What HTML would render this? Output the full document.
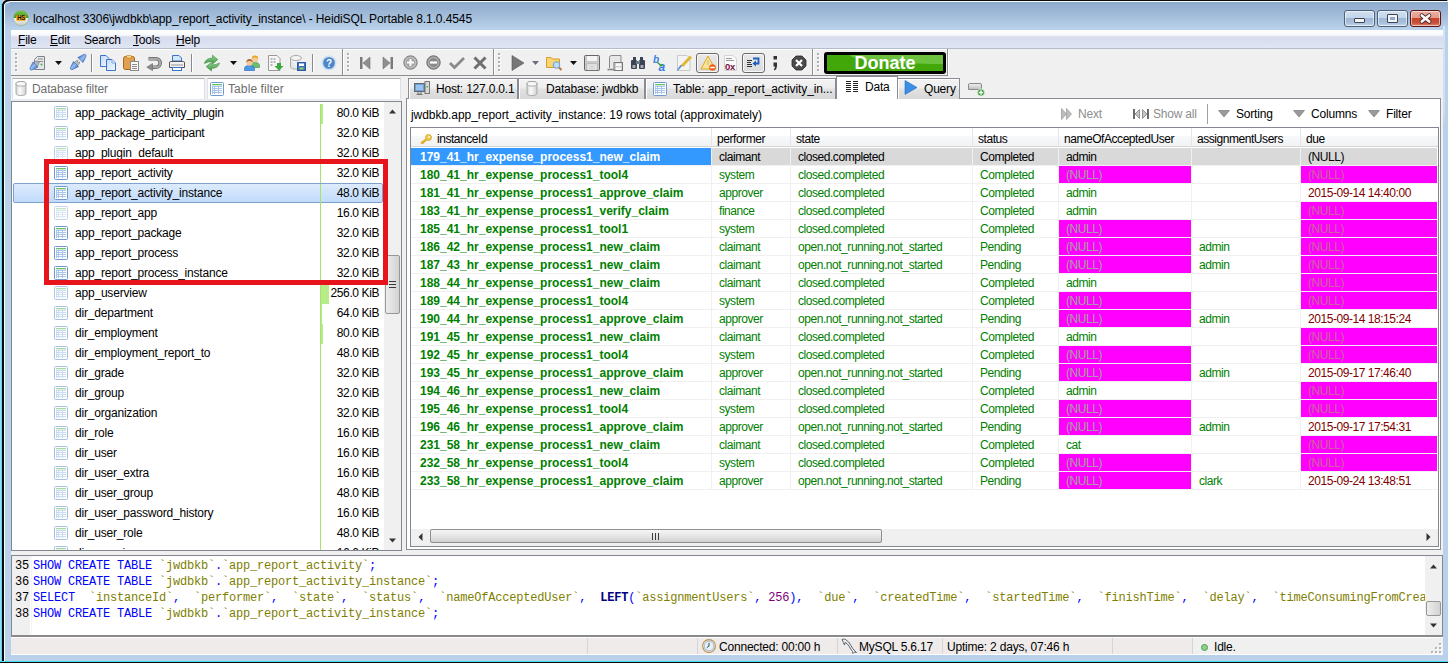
<!DOCTYPE html>
<html><head><meta charset="utf-8"><style>
*{box-sizing:border-box;margin:0;padding:0}
html,body{width:1448px;height:663px;overflow:hidden;background:#b9d1ea}
body{position:relative;font-family:"Liberation Sans", sans-serif;font-size:12px;color:#000;letter-spacing:-0.2px}
.ab{position:absolute}
.t{position:absolute;white-space:pre;line-height:14px}
svg{position:absolute;overflow:visible}
</style></head><body>
<div class="ab" style="left:0;top:0;width:1448px;height:663px;background:linear-gradient(#8eaacb 2px,#a0bad8 14px,#b9d1ea 29px,#b9d1ea 100%)"></div><div class="ab" style="left:0;top:0;width:1447px;height:1px;background:#0a0a0a"></div><div class="ab" style="left:4px;top:1px;width:1444px;height:1px;background:#f8fbff"></div><div class="ab" style="left:0;top:0;width:1px;height:663px;background:#a8d4ee"></div><div class="ab" style="left:1px;top:0;width:1px;height:663px;background:#4fd8f8"></div><div class="ab" style="left:2px;top:0;width:2px;height:663px;background:#0a0a0a"></div><div class="ab" style="left:4px;top:2px;width:1px;height:659px;background:#fbfdff"></div><div class="ab" style="left:0;top:661px;width:1448px;height:1px;background:#40dcf0"></div><div class="ab" style="left:0;top:662px;width:1448px;height:1px;background:#0a0a0a"></div><svg style="left:0;top:0" width="10" height="10" viewBox="0 0 10 10"><rect x="0" y="0" width="9" height="4" fill="#b8d0ee"/><rect x="0" y="0" width="2" height="10" fill="#a8d4ee"/><rect x="1" y="3" width="1" height="7" fill="#4fd8f8"/><path d="M3 10 V6.5 Q3 1 8.5 0.5 H10" fill="none" stroke="#0a0a0a" stroke-width="2"/><path d="M4.5 10 V6.5 Q4.5 2 9 2 H10" fill="none" stroke="#f8fbff" stroke-width="1"/><path d="M5.5 10 V6.5 Q5.5 3 9 3 H10" fill="#9bb6d5" stroke="none"/></svg><svg style="left:13px;top:10px" width="16" height="16" viewBox="0 0 16 16">
<defs><linearGradient id="ig" x1="0" y1="0" x2="0" y2="1"><stop offset="0" stop-color="#7cc84a"/><stop offset="0.5" stop-color="#3f9a1c"/><stop offset="0.5" stop-color="#f4f4f0"/><stop offset="1" stop-color="#c9cfc0"/></linearGradient></defs>
<circle cx="8" cy="8" r="7.6" fill="url(#ig)" stroke="#9aa88a" stroke-width="0.6"/>
<rect x="3.2" y="5.3" width="9.6" height="5.4" rx="1.2" fill="#f5a81c"/>
<text x="8" y="10.3" font-family="Liberation Sans" font-weight="bold" font-size="7" text-anchor="middle" fill="#111" letter-spacing="-0.4" transform="translate(8 0) scale(0.85 1) translate(-8 0)">HS</text>
</svg><div class="t" style="left:33px;top:12px;font-size:12px;letter-spacing:-0.1px;color:#000">localhost 3306\jwdbkb\app_report_activity_instance\ - HeidiSQL Portable 8.1.0.4545</div><div class="ab" style="left:1344px;top:10px;width:31px;height:17px;border:1px solid #4f607a;border-radius:3px;background:linear-gradient(#d0dff0 0%,#c3d6ec 45%,#9fb8d5 50%,#a9c1dd 80%,#c7daef 100%);box-shadow:inset 0 0 0 1px rgba(255,255,255,0.55)"></div><div class="ab" style="left:1377px;top:10px;width:31px;height:17px;border:1px solid #4f607a;border-radius:3px;background:linear-gradient(#d0dff0 0%,#c3d6ec 45%,#9fb8d5 50%,#a9c1dd 80%,#c7daef 100%);box-shadow:inset 0 0 0 1px rgba(255,255,255,0.55)"></div><div class="ab" style="left:1410px;top:10px;width:31px;height:17px;border:1px solid #5a1414;border-radius:3px;background:linear-gradient(#eab0a2 0%,#e39a88 45%,#c7452a 50%,#c8503a 80%,#d98a70 100%);box-shadow:inset 0 0 0 1px rgba(255,255,255,0.55)"></div><div class="ab" style="left:1354px;top:18px;width:11px;height:5px;background:#f4f4f4;border:1px solid #3b4556;border-radius:1px"></div><div class="ab" style="left:1387px;top:14px;width:11px;height:9px;background:#8fa9c8;border:1px solid #3b4556;box-shadow:inset 0 0 0 2px #f4f4f4;border-radius:1px"></div><svg style="left:1420px;top:14px" width="11" height="9" viewBox="0 0 11 9"><path d="M1.8 1.5 L9.2 7.5 M9.2 1.5 L1.8 7.5" stroke="#4a2a2a" stroke-width="4.2" stroke-linecap="round"/><path d="M1.8 1.5 L9.2 7.5 M9.2 1.5 L1.8 7.5" stroke="#fafafa" stroke-width="2.6" stroke-linecap="round"/></svg><div class="ab" style="left:1443px;top:26px;width:2px;height:100px;background:linear-gradient(#d4e4f4,#cddff1 85%,rgba(185,209,234,0))"></div><div class="ab" style="left:11px;top:30px;width:1432px;height:625px;background:#f0f0f0"></div><div class="ab" style="left:11px;top:30px;width:1432px;height:19px;background:linear-gradient(#ffffff 0px,#f8f9fc 5px,#d7dcee 7px,#e0e5f3 18px);border-bottom:1px solid #b6bccc"></div><div class="t" style="left:18px;top:33px;color:#000"><span style="text-decoration:underline;text-underline-offset:1px">F</span>ile</div><div class="t" style="left:50px;top:33px;color:#000"><span style="text-decoration:underline;text-underline-offset:1px">E</span>dit</div><div class="t" style="left:84px;top:33px;color:#000">Search</div><div class="t" style="left:133px;top:33px;color:#000"><span style="text-decoration:underline;text-underline-offset:1px">T</span>ools</div><div class="t" style="left:176px;top:33px;color:#000"><span style="text-decoration:underline;text-underline-offset:1px">H</span>elp</div><div class="ab" style="left:11px;top:49px;width:937px;height:27px;background:#f0f0f0;border-top:1px solid #fff;border-bottom:1px solid #8e8e8e"></div><div class="ab" style="left:342px;top:49px;width:1px;height:26px;background:#8e8e8e"></div><div class="ab" style="left:343px;top:50px;width:1px;height:25px;background:#fff"></div><div class="ab" style="left:493px;top:49px;width:1px;height:26px;background:#8e8e8e"></div><div class="ab" style="left:494px;top:50px;width:1px;height:25px;background:#fff"></div><div class="ab" style="left:812px;top:49px;width:1px;height:26px;background:#8e8e8e"></div><div class="ab" style="left:813px;top:50px;width:1px;height:25px;background:#fff"></div><div class="ab" style="left:947px;top:49px;width:1px;height:26px;background:#8e8e8e"></div><div class="ab" style="left:948px;top:50px;width:1px;height:25px;background:#fff"></div><div class="ab" style="left:15px;top:53px;width:2px;height:2px;background:#a8a8a8;border-radius:0 1px 0 1px;box-shadow:1px 1px 0 #fff"></div><div class="ab" style="left:15px;top:57px;width:2px;height:2px;background:#a8a8a8;border-radius:0 1px 0 1px;box-shadow:1px 1px 0 #fff"></div><div class="ab" style="left:15px;top:61px;width:2px;height:2px;background:#a8a8a8;border-radius:0 1px 0 1px;box-shadow:1px 1px 0 #fff"></div><div class="ab" style="left:15px;top:65px;width:2px;height:2px;background:#a8a8a8;border-radius:0 1px 0 1px;box-shadow:1px 1px 0 #fff"></div><div class="ab" style="left:15px;top:69px;width:2px;height:2px;background:#a8a8a8;border-radius:0 1px 0 1px;box-shadow:1px 1px 0 #fff"></div><div class="ab" style="left:347px;top:53px;width:2px;height:2px;background:#a8a8a8;border-radius:0 1px 0 1px;box-shadow:1px 1px 0 #fff"></div><div class="ab" style="left:347px;top:57px;width:2px;height:2px;background:#a8a8a8;border-radius:0 1px 0 1px;box-shadow:1px 1px 0 #fff"></div><div class="ab" style="left:347px;top:61px;width:2px;height:2px;background:#a8a8a8;border-radius:0 1px 0 1px;box-shadow:1px 1px 0 #fff"></div><div class="ab" style="left:347px;top:65px;width:2px;height:2px;background:#a8a8a8;border-radius:0 1px 0 1px;box-shadow:1px 1px 0 #fff"></div><div class="ab" style="left:347px;top:69px;width:2px;height:2px;background:#a8a8a8;border-radius:0 1px 0 1px;box-shadow:1px 1px 0 #fff"></div><div class="ab" style="left:498px;top:53px;width:2px;height:2px;background:#a8a8a8;border-radius:0 1px 0 1px;box-shadow:1px 1px 0 #fff"></div><div class="ab" style="left:498px;top:57px;width:2px;height:2px;background:#a8a8a8;border-radius:0 1px 0 1px;box-shadow:1px 1px 0 #fff"></div><div class="ab" style="left:498px;top:61px;width:2px;height:2px;background:#a8a8a8;border-radius:0 1px 0 1px;box-shadow:1px 1px 0 #fff"></div><div class="ab" style="left:498px;top:65px;width:2px;height:2px;background:#a8a8a8;border-radius:0 1px 0 1px;box-shadow:1px 1px 0 #fff"></div><div class="ab" style="left:498px;top:69px;width:2px;height:2px;background:#a8a8a8;border-radius:0 1px 0 1px;box-shadow:1px 1px 0 #fff"></div><div class="ab" style="left:817px;top:53px;width:2px;height:2px;background:#a8a8a8;border-radius:0 1px 0 1px;box-shadow:1px 1px 0 #fff"></div><div class="ab" style="left:817px;top:57px;width:2px;height:2px;background:#a8a8a8;border-radius:0 1px 0 1px;box-shadow:1px 1px 0 #fff"></div><div class="ab" style="left:817px;top:61px;width:2px;height:2px;background:#a8a8a8;border-radius:0 1px 0 1px;box-shadow:1px 1px 0 #fff"></div><div class="ab" style="left:817px;top:65px;width:2px;height:2px;background:#a8a8a8;border-radius:0 1px 0 1px;box-shadow:1px 1px 0 #fff"></div><div class="ab" style="left:817px;top:69px;width:2px;height:2px;background:#a8a8a8;border-radius:0 1px 0 1px;box-shadow:1px 1px 0 #fff"></div><div class="ab" style="left:91px;top:54px;width:1px;height:18px;background:#8a8a8a;box-shadow:1px 0 0 #fff"></div><div class="ab" style="left:191px;top:54px;width:1px;height:18px;background:#8a8a8a;box-shadow:1px 0 0 #fff"></div><div class="ab" style="left:312px;top:54px;width:1px;height:18px;background:#8a8a8a;box-shadow:1px 0 0 #fff"></div><svg style="left:55px;top:61px" width="8" height="5" viewBox="0 0 8 5"><path d="M0 0 H7 L3.5 4 Z" fill="#111"/></svg><svg style="left:230px;top:61px" width="8" height="5" viewBox="0 0 8 5"><path d="M0 0 H7 L3.5 4 Z" fill="#111"/></svg><svg style="left:532px;top:61px" width="8" height="5" viewBox="0 0 8 5"><path d="M0 0 H7 L3.5 4 Z" fill="#6a6e78"/></svg><svg style="left:570px;top:61px" width="8" height="5" viewBox="0 0 8 5"><path d="M0 0 H7 L3.5 4 Z" fill="#111"/></svg><svg width="0" height="0" style="position:absolute"><defs><linearGradient id="plg" x1="0" y1="0" x2="1" y2="0"><stop offset="0" stop-color="#4a7cd0"/><stop offset="0.45" stop-color="#9cc0f0"/><stop offset="1" stop-color="#4070c4"/></linearGradient></defs></svg><svg style="left:29px;top:55px" width="16" height="16" viewBox="0 0 16 16"><path d="M8.5 1.5 H15.5 V14.5 H5.5 V4.5 Z" fill="#e4e6e8" stroke="#7d8288"/><path d="M9 4h5M9 6.5h5" stroke="#8a8e92" stroke-width="1.2"/><circle cx="12.5" cy="9.5" r="1" fill="#3cb44b"/><g transform="translate(6.6 9.4) rotate(45) scale(0.85)"><rect x="-2.6" y="-3.2" width="5.2" height="3.4" fill="#b8bcc0" stroke="#6e7478" stroke-width="0.6"/><rect x="-2" y="-5" width="1.3" height="2" fill="#8a8f94"/><rect x="0.7" y="-5" width="1.3" height="2" fill="#8a8f94"/><path d="M-4.2 0 H4.2 L2.2 6.2 Q1.8 8.6 0 8.8 Q-1.8 8.6 -2.2 6.2 Z" fill="url(#plg)" stroke="#3666b4" stroke-width="0.7"/></g></svg><svg style="left:69px;top:55px" width="16" height="16" viewBox="0 0 16 16"><g transform="translate(7 9) rotate(45) scale(0.85)"><rect x="-2.6" y="-3.2" width="5.2" height="3.4" fill="#b8bcc0" stroke="#6e7478" stroke-width="0.6"/><rect x="-2" y="-5" width="1.3" height="2" fill="#8a8f94"/><rect x="0.7" y="-5" width="1.3" height="2" fill="#8a8f94"/><path d="M-4.2 0 H4.2 L2.2 6.2 Q1.8 8.6 0 8.8 Q-1.8 8.6 -2.2 6.2 Z" fill="url(#plg)" stroke="#3666b4" stroke-width="0.7"/></g><g transform="translate(11.4 5) rotate(225) scale(0.85)"><path d="M-4.2 0 H4.2 L2.2 6.2 Q1.8 8.6 0 8.8 Q-1.8 8.6 -2.2 6.2 Z" fill="url(#plg)" stroke="#3666b4" stroke-width="0.7"/></g></svg><svg style="left:100px;top:55px" width="16" height="16" viewBox="0 0 16 16"><defs><linearGradient id="cpg" x1="0" y1="0" x2="1" y2="1"><stop offset="0" stop-color="#c4dafa"/><stop offset="1" stop-color="#f4f8fe"/></linearGradient></defs><path d="M0.5 0.5 H6 L9 3.5 V11.5 H0.5 Z" fill="url(#cpg)" stroke="#3b73c8"/><path d="M6.5 4.5 H12 L15.5 8 V15.5 H6.5 Z" fill="url(#cpg)" stroke="#3b73c8"/><path d="M12 4.5 V8 H15.5" fill="#e8f0fc" stroke="#6a98d8" stroke-width="0.8"/></svg><svg style="left:123px;top:55px" width="16" height="16" viewBox="0 0 16 16"><rect x="0.5" y="1.5" width="11" height="13" rx="2" fill="#e0a050" stroke="#a8651f"/><rect x="3.5" y="0.5" width="5" height="2.5" rx="0.5" fill="#f6da80" stroke="#b87a30" stroke-width="0.6"/><rect x="7.5" y="6.5" width="8" height="9" fill="#fafafa" stroke="#8a8a8a"/><path d="M9 9.5h5M9 11.5h5M9 13.5h5" stroke="#8c8c8c" stroke-width="1"/></svg><svg style="left:146px;top:55px" width="16" height="16" viewBox="0 0 16 16"><path d="M2.5 3.8 H10 A4.2 4.2 0 0 1 10 12.2 H5.5" fill="none" stroke="#666" stroke-width="3.6"/><path d="M2.5 3.8 H10 A4.2 4.2 0 0 1 10 12.2 H5.5" fill="none" stroke="#a8a8a8" stroke-width="2.2"/><path d="M6.5 8.6 L0.8 12.2 L6.5 15.6 Z" fill="#8c8c8c" stroke="#666" stroke-width="0.6"/></svg><svg style="left:169px;top:55px" width="16" height="16" viewBox="0 0 16 16"><path d="M3.5 0.5 H10 L12.5 3 V6 H3.5 Z" fill="#d4e6fa" stroke="#3b73c8"/><path d="M1.5 6.5 H14.5 Q15.5 6.5 15.5 8 V12.5 H0.5 V8 Q0.5 6.5 1.5 6.5 Z" fill="#f2f2f2" stroke="#555"/><rect x="2" y="9" width="12" height="2" fill="#c4c4c4"/><rect x="3.5" y="12.5" width="9" height="3" fill="#fff" stroke="#3b73c8"/></svg><svg style="left:204px;top:55px" width="16" height="16" viewBox="0 0 16 16"><defs><linearGradient id="rfg" x1="0" y1="0" x2="0" y2="1"><stop offset="0" stop-color="#9ad49a"/><stop offset="1" stop-color="#3e9a3e"/></linearGradient></defs><path d="M0.5 8.5 Q1.5 3.2 8.5 3 V0.2 L13.8 4.6 L8.5 9 V6.4 Q3.5 6.4 0.5 8.5 Z" fill="url(#rfg)" stroke="#3a8a3a" stroke-width="0.6"/><path d="M15.5 8 Q14.5 13.2 7.5 13.4 V16 L2.2 11.6 L7.5 7.2 V9.9 Q12.5 9.9 15.5 8 Z" fill="url(#rfg)" stroke="#3a8a3a" stroke-width="0.6"/></svg><svg style="left:244px;top:55px" width="16" height="16" viewBox="0 0 16 16"><path d="M6.5 11 Q6.5 7.5 11 7.5 Q15.5 7.5 15.5 11 V12.5 H6.5 Z" fill="#6cc06c" stroke="#3d8b3d" stroke-width="0.6"/><circle cx="11" cy="4" r="3.2" fill="#f4caa0"/><path d="M7.8 4 Q7.8 0.6 11 0.6 Q14.2 0.6 14.2 4 Q13 2.2 11 2.5 Q9 2.2 7.8 4 Z" fill="#e8a820"/><path d="M0.5 15.5 V13.5 Q0.5 10.5 5.5 10.5 Q10.5 10.5 10.5 13.5 V15.5 Z" fill="#4a98e8" stroke="#2a60b8" stroke-width="0.6"/><circle cx="5.5" cy="7.5" r="3.2" fill="#f4caa0"/><path d="M2.3 7.5 Q2.3 4 5.5 4 Q8.7 4 8.7 7.5 Q7.5 5.8 5.5 6 Q3.5 5.8 2.3 7.5 Z" fill="#a86a3a"/></svg><svg style="left:268px;top:55px" width="16" height="16" viewBox="0 0 16 16"><path d="M0.5 0.5 H9 L12 3.5 V15.5 H0.5 Z" fill="#f8f8f8" stroke="#999"/><path d="M2.5 4h2M5.5 4h2M2.5 7h2M5.5 7h2M2.5 10h2" stroke="#777"/><path d="M9 8 H13 V11 H15.5 L11 15.5 L6.5 11 H9 Z" fill="#3aa83a"/></svg><svg style="left:290px;top:55px" width="16" height="16" viewBox="0 0 16 16"><ellipse cx="6" cy="3" rx="5.5" ry="2.5" fill="#f4f4f4" stroke="#aaa"/><path d="M0.5 3 V12 A5.5 2.5 0 0 0 7 14" fill="#e6e6e6" stroke="#aaa"/><rect x="7.5" y="7.5" width="8" height="8" fill="#3b73c8" stroke="#2a5aa0"/><rect x="9" y="8.5" width="5" height="2.5" fill="#fff"/><rect x="9.5" y="12.5" width="4" height="2" fill="#9fd35a"/></svg><svg style="left:321px;top:55px" width="16" height="16" viewBox="0 0 16 16"><circle cx="8" cy="8" r="7.5" fill="#c8dcf4"/><circle cx="8" cy="8" r="6.3" fill="#4a86c8" stroke="#e8f0fa" stroke-width="0.8"/><text x="8" y="11.6" font-family="Liberation Sans" font-weight="bold" font-size="10" text-anchor="middle" fill="#fff" letter-spacing="0">?</text></svg><svg style="left:357px;top:55px" width="16" height="16" viewBox="0 0 16 16"><rect x="3" y="2" width="2.5" height="12" fill="#7a7a7a"/><path d="M13 2 V14 L6 8 Z" fill="#8f8f8f" stroke="#666" stroke-width="0.5"/></svg><svg style="left:380px;top:55px" width="16" height="16" viewBox="0 0 16 16"><rect x="10.5" y="2" width="2.5" height="12" fill="#7a7a7a"/><path d="M3 2 V14 L10 8 Z" fill="#8f8f8f" stroke="#666" stroke-width="0.5"/></svg><svg style="left:403px;top:55px" width="16" height="16" viewBox="0 0 16 16"><circle cx="7.5" cy="7.5" r="6.7" fill="#b0b0b0" stroke="#7c7c7c" stroke-width="1"/><circle cx="7.5" cy="7.5" r="5" fill="#a2a2a2" stroke="#d8d8d8" stroke-width="0.6"/><path d="M7.5 4 V11 M4 7.5 H11" stroke="#fff" stroke-width="2"/></svg><svg style="left:426px;top:55px" width="16" height="16" viewBox="0 0 16 16"><circle cx="7.5" cy="7.5" r="6.7" fill="#9a9a9a" stroke="#6e6e6e" stroke-width="1"/><circle cx="7.5" cy="7.5" r="5" fill="#8a8a8a" stroke="#cfcfcf" stroke-width="0.6"/><path d="M4 7.5 H11" stroke="#fff" stroke-width="2.2"/></svg><svg style="left:449px;top:55px" width="16" height="16" viewBox="0 0 16 16"><path d="M1 8 L5.5 12.5 L15 3" fill="none" stroke="#8a8a8a" stroke-width="2.8"/></svg><svg style="left:472px;top:55px" width="16" height="16" viewBox="0 0 16 16"><path d="M2.5 2.5 L13.5 13.5 M13.5 2.5 L2.5 13.5" stroke="#6e6e6e" stroke-width="3"/></svg><svg style="left:510px;top:55px" width="16" height="16" viewBox="0 0 16 16"><path d="M2 0.5 V15.5 L14 8 Z" fill="#777" stroke="#555" stroke-width="0.6"/></svg><svg style="left:546px;top:55px" width="16" height="16" viewBox="0 0 16 16"><path d="M0.5 2.5 H5 L6.5 4 H13.5 V12.5 H0.5 Z" fill="#f7d772" stroke="#d99a2a"/><circle cx="10.5" cy="10" r="3.3" fill="#bcdcf8" stroke="#6aa0d8"/><path d="M13 12.5 L15.5 15" stroke="#c07840" stroke-width="2"/></svg><svg style="left:584px;top:55px" width="16" height="16" viewBox="0 0 16 16"><rect x="0.5" y="0.5" width="15" height="15" rx="1" fill="#c9c9c9" stroke="#666"/><rect x="3" y="1" width="10" height="5" fill="#f4f4f4"/><rect x="3" y="9" width="10" height="6" fill="#f8f8f8" stroke="#999" stroke-width="0.5"/><path d="M4.5 11h7M4.5 13h7" stroke="#aaa" stroke-width="0.8"/></svg><svg style="left:607px;top:55px" width="16" height="16" viewBox="0 0 16 16"><path d="M2.5 13 V2.5 Q2.5 0.5 4.5 0.5 H14 V8" fill="#e8e8e8" stroke="#888"/><rect x="7" y="7.5" width="8.5" height="8" fill="#d0d0d0" stroke="#777"/><rect x="9" y="8.5" width="5" height="2.5" fill="#fafafa"/><rect x="9" y="12.5" width="5" height="2.5" fill="#fafafa"/><path d="M0.5 14.5 H7" stroke="#888" stroke-width="1.6"/></svg><svg style="left:630px;top:55px" width="16" height="16" viewBox="0 0 16 16"><rect x="1" y="5" width="6" height="9" rx="1" fill="#3a4452"/><rect x="9" y="5" width="6" height="9" rx="1" fill="#3a4452"/><rect x="3" y="2" width="3" height="4" fill="#3a4452"/><rect x="10" y="2" width="3" height="4" fill="#3a4452"/><rect x="6" y="6" width="4" height="3" fill="#6b7a8c"/><rect x="2.5" y="10" width="3" height="3" fill="#aab"/><rect x="10.5" y="10" width="3" height="3" fill="#aab"/></svg><svg style="left:653px;top:55px" width="16" height="16" viewBox="0 0 16 16"><text x="0" y="8" font-family="Liberation Sans" font-style="italic" font-weight="bold" font-size="10" fill="#3a7ee0" letter-spacing="0">b</text><text x="5.5" y="15.5" font-family="Liberation Sans" font-style="italic" font-weight="bold" font-size="12" fill="#3a7ee0" letter-spacing="0">a</text><path d="M4.5 7.5 L8 10.5" stroke="#30a040" stroke-width="1.4"/><path d="M6.5 11.5 L9.5 11.5 L9 8.5 Z" fill="#30a040"/></svg><svg style="left:676px;top:55px" width="16" height="16" viewBox="0 0 16 16"><path d="M1.5 0.5 H11 L14 3.5 V15.5 H1.5 Z" fill="#f4f4f4" stroke="#c8c8c8"/><path d="M15 1.5 L6 11" stroke="#e0b830" stroke-width="3"/><path d="M6.5 10.5 L2 15.5 L0.5 15.5 L4.5 10 Z" fill="#5a8ad0"/></svg><div class="ab" style="left:696px;top:53px;width:23px;height:20px;border:1px solid #6a6a6a;border-radius:3px;background:linear-gradient(#e8e8e8,#dcdcdc);box-shadow:inset 0 0 0 1px #f8f8f8"></div><div class="ab" style="left:742px;top:53px;width:23px;height:20px;border:1px solid #6a6a6a;border-radius:3px;background:linear-gradient(#e8e8e8,#dcdcdc);box-shadow:inset 0 0 0 1px #f8f8f8"></div><svg style="left:700px;top:55px" width="16" height="16" viewBox="0 0 16 16"><path d="M8 1 L15 14 H1 Z" fill="#fbe39a" stroke="#e0a820" stroke-width="1"/><rect x="7.2" y="5" width="1.6" height="5" fill="#d8c890"/><circle cx="12.5" cy="12.5" r="3.3" fill="#e8641e"/><rect x="10.3" y="11.8" width="4.4" height="1.4" fill="#fff"/></svg><svg style="left:723px;top:55px" width="16" height="16" viewBox="0 0 16 16"><path d="M1.5 0.5 H10 L13.5 4 V15.5 H1.5 Z" fill="#fafafa" stroke="#d4d4d4"/><path d="M3 3.5h6M3 5.5h8" stroke="#9a9a9a" stroke-width="1"/><text x="2" y="14.5" font-family="Liberation Sans" font-weight="bold" font-size="9.5" fill="#7a1040" letter-spacing="-0.4">0x</text></svg><svg style="left:746px;top:55px" width="16" height="16" viewBox="0 0 16 16"><path d="M1 5.5h5M1 7.5h4M1 9.5h5M1 11.5h5" stroke="#333" stroke-width="1"/><path d="M7 3.5 H12.5 V8.5 H9" fill="none" stroke="#1a5ec0" stroke-width="1.8"/><path d="M10 5.5 L6.5 8.5 L10 11.5 Z" fill="#1a5ec0"/></svg><svg style="left:772px;top:55px" width="7" height="16" viewBox="0 0 7 16"><rect x="1.5" y="1" width="3.5" height="3.5" fill="#333"/><path d="M1.5 7.5 H5 V11 Q5 14 2.5 15.5 L1.8 14.6 Q3 13.5 3 11.5 H1.5 Z" fill="#333"/></svg><svg style="left:791px;top:55px" width="16" height="16" viewBox="0 0 16 16"><path d="M5 1 H11 L15 5 V11 L11 15 H5 L1 11 V5 Z" fill="#4a4a4a" stroke="#2a2a2a" stroke-width="0.8"/><path d="M5 5 L11 11 M11 5 L5 11" stroke="#fff" stroke-width="2.2"/></svg><div class="ab" style="left:824px;top:52px;width:122px;height:22px;background:#000;border-radius:3px"></div><div class="ab" style="left:827px;top:55px;width:116px;height:16px;background:#42a80a;overflow:hidden"><div class="ab" style="left:23px;top:0;width:100px;height:9px;border-bottom-left-radius:93px 9px;background:#6cc23e"></div></div><div class="t" style="left:824px;top:53px;width:122px;text-align:center;font-size:18px;font-weight:bold;color:#fff;line-height:20px;letter-spacing:0">Donate</div><div class="ab" style="left:12px;top:78px;width:193px;height:22px;background:#fff;border:1px solid #abadb3;border-top-color:#abadb3;border-left-color:#e2e3ea;border-right-color:#dbdfe6;border-bottom-color:#e3e9ef;border-radius:1px"></div><div class="ab" style="left:207px;top:78px;width:194px;height:22px;background:#fff;border:1px solid #abadb3;border-top-color:#abadb3;border-left-color:#e2e3ea;border-right-color:#dbdfe6;border-bottom-color:#e3e9ef;border-radius:1px"></div><svg width="0" height="0" style="position:absolute"><defs><linearGradient id="dbg" x1="0" y1="0" x2="1" y2="0"><stop offset="0" stop-color="#d8d8d8"/><stop offset="0.4" stop-color="#fafafa"/><stop offset="1" stop-color="#cfcfcf"/></linearGradient></defs></svg><svg style="left:15px;top:81px" width="12" height="16" viewBox="0 0 12 16"><ellipse cx="6" cy="2.8" rx="5" ry="2.3" fill="#f6f6f6" stroke="#9a9a9a" stroke-width="0.8"/><path d="M1 2.8 V12.2 A5 2.3 0 0 0 11 12.2 V2.8" fill="url(#dbg)" stroke="#9a9a9a" stroke-width="0.8"/><ellipse cx="6" cy="2.8" rx="5" ry="2.3" fill="#f8f8f8" stroke="#9a9a9a" stroke-width="0.8"/></svg><div class="t" style="left:32px;top:82px;color:#6d6d6d;letter-spacing:-0.1px">Database filter</div><svg style="left:210px;top:82px" width="14" height="14" viewBox="0 0 14 14"><g opacity="1"><rect x="0.5" y="0.5" width="13" height="13" rx="1" fill="#fff" stroke="#6d98d0"/><rect x="2" y="2" width="10" height="1.3" fill="#6cbf6c"/><rect x="2" y="4" width="10" height="8" fill="#a9c5ea"/><path d="M3 5.5h1M5 5.5h3M9 5.5h3M3 7.5h1M5 7.5h3M9 7.5h3M3 9.5h1M5 9.5h3M9 9.5h3M3 11.5h1M5 11.5h3M9 11.5h3" stroke="#fff" stroke-width="1"/></g></svg><div class="t" style="left:228px;top:82px;color:#6d6d6d;letter-spacing:0.1px">Table filter</div><div class="ab" style="left:406px;top:98px;width:1035px;height:452px;background:#fff;border:1px solid #898c95"></div><div class="ab" style="left:408px;top:78px;width:110px;height:21px;background:linear-gradient(#f3f3f3 0%,#eeeeee 45%,#e2e2e2 50%,#d8d8d8 100%);border:1px solid #898c95;border-bottom:none;box-shadow:inset 1px 1px 0 #fff"></div><div class="ab" style="left:518px;top:78px;width:127px;height:21px;background:linear-gradient(#f3f3f3 0%,#eeeeee 45%,#e2e2e2 50%,#d8d8d8 100%);border:1px solid #898c95;border-bottom:none;box-shadow:inset 1px 1px 0 #fff"></div><div class="ab" style="left:645px;top:78px;width:191px;height:21px;background:linear-gradient(#f3f3f3 0%,#eeeeee 45%,#e2e2e2 50%,#d8d8d8 100%);border:1px solid #898c95;border-bottom:none;box-shadow:inset 1px 1px 0 #fff"></div><div class="ab" style="left:897px;top:78px;width:63px;height:21px;background:linear-gradient(#f3f3f3 0%,#eeeeee 45%,#e2e2e2 50%,#d8d8d8 100%);border:1px solid #898c95;border-bottom:none;box-shadow:inset 1px 1px 0 #fff"></div><div class="ab" style="left:836px;top:76px;width:62px;height:23px;background:#fff;border:1px solid #898c95;border-bottom:none"></div><div class="ab" style="left:837px;top:98px;width:60px;height:1px;background:#fff"></div><svg style="left:414px;top:81px" width="16" height="16" viewBox="0 0 16 16"><rect x="0.5" y="2.5" width="10" height="8" fill="#6aa0e0" stroke="#666"/><rect x="2" y="4" width="7" height="5" fill="#9cc4f0"/><path d="M4 11v2h3v-2M2.5 13.5h6" stroke="#777" fill="none"/><rect x="11" y="0.5" width="4.5" height="12" fill="#d8d8d8" stroke="#777"/><rect x="12.5" y="5" width="1.5" height="1.5" fill="#3cb44b"/></svg><div class="t" style="left:436px;top:82px">Host: 127.0.0.1</div><svg style="left:526px;top:81px" width="12" height="16" viewBox="0 0 12 16"><ellipse cx="6" cy="2.8" rx="5" ry="2.3" fill="#f6f6f6" stroke="#9a9a9a" stroke-width="0.8"/><path d="M1 2.8 V12.2 A5 2.3 0 0 0 11 12.2 V2.8" fill="url(#dbg)" stroke="#9a9a9a" stroke-width="0.8"/><ellipse cx="6" cy="2.8" rx="5" ry="2.3" fill="#f8f8f8" stroke="#9a9a9a" stroke-width="0.8"/></svg><div class="t" style="left:546px;top:82px">Database: jwdbkb</div><svg style="left:653px;top:82px" width="14" height="14" viewBox="0 0 14 14"><g opacity="1"><rect x="0.5" y="0.5" width="13" height="13" rx="1" fill="#fff" stroke="#6d98d0"/><rect x="2" y="2" width="10" height="1.3" fill="#6cbf6c"/><rect x="2" y="4" width="10" height="8" fill="#a9c5ea"/><path d="M3 5.5h1M5 5.5h3M9 5.5h3M3 7.5h1M5 7.5h3M9 7.5h3M3 9.5h1M5 9.5h3M9 9.5h3M3 11.5h1M5 11.5h3M9 11.5h3" stroke="#fff" stroke-width="1"/></g></svg><div class="t" style="left:673px;top:82px;letter-spacing:-0.1px">Table: app_report_activity_in...</div><svg style="left:846px;top:81px" width="13" height="12" viewBox="0 0 13 12"><path d="M0 0.5h5M7 0.5h5M0 2.5h5M7 2.5h5M0 4.5h5M7 4.5h5M0 6.5h5M7 6.5h5M0 8.5h5M7 8.5h5M0 10.5h5M7 10.5h5" stroke="#222" stroke-width="1"/></svg><div class="t" style="left:865px;top:80px">Data</div><svg style="left:904px;top:80px" width="14" height="15" viewBox="0 0 14 15"><path d="M1 0.5 L13 7.5 L1 14.5 Z" fill="#3a8ee6" stroke="#1f6cc0" stroke-width="0.6"/></svg><div class="t" style="left:924px;top:82px">Query</div><svg style="left:968px;top:81px" width="17" height="16" viewBox="0 0 17 16"><defs><linearGradient id="atg" x1="0" y1="0" x2="0" y2="1"><stop offset="0" stop-color="#f2f2f2"/><stop offset="1" stop-color="#bdbdbd"/></linearGradient></defs><path d="M1.5 2.5 H12 Q13.5 2.5 13.5 4 V8.5 H0.5 V4 Q0.5 2.5 1.5 2.5 Z" fill="url(#atg)" stroke="#8a8a8a"/><circle cx="13" cy="11.5" r="3.6" fill="#3c9c3c" stroke="#e8f4e8" stroke-width="0.8"/><path d="M13 9.3v4.4M10.8 11.5h4.4" stroke="#fff" stroke-width="1.3"/></svg><div class="t" style="left:411px;top:108px;letter-spacing:-0.05px">jwdbkb.app_report_activity_instance: 19 rows total (approximately)</div><svg style="left:1061px;top:108px" width="12" height="12" viewBox="0 0 12 12"><path d="M0.5 0.5 V11.5 L5.5 6 Z" fill="#bdbdbd" stroke="#8a8a8a" stroke-width="0.6"/><path d="M5.5 0.5 V11.5 L10.5 6 Z" fill="#bdbdbd" stroke="#8a8a8a" stroke-width="0.6"/></svg><div class="t" style="left:1078px;top:107px;color:#8d8d8d">Next</div><svg style="left:1132px;top:109px" width="18" height="10" viewBox="0 0 18 10"><rect x="1" y="0" width="2" height="10" fill="#6a6a6a"/><path d="M3 5 L7.5 0.5 V9.5 Z" fill="#c4c4c4" stroke="#808080" stroke-width="0.8"/><path d="M15 5 L10.5 0.5 V9.5 Z" fill="#c4c4c4" stroke="#808080" stroke-width="0.8"/><rect x="15" y="0" width="2" height="10" fill="#6a6a6a"/></svg><div class="t" style="left:1153px;top:107px;color:#8d8d8d">Show all</div><div class="ab" style="left:1207px;top:104px;width:1px;height:20px;background:#a0a0a0"></div><svg style="left:1218px;top:110px" width="12" height="8" viewBox="0 0 12 8"><path d="M0.5 0.5 H11.5 L6 7 Z" fill="#9a9a9a" stroke="#6e6e6e" stroke-width="0.6"/></svg><div class="t" style="left:1236px;top:107px">Sorting</div><svg style="left:1293px;top:110px" width="12" height="8" viewBox="0 0 12 8"><path d="M0.5 0.5 H11.5 L6 7 Z" fill="#9a9a9a" stroke="#6e6e6e" stroke-width="0.6"/></svg><div class="t" style="left:1311px;top:107px">Columns</div><svg style="left:1368px;top:110px" width="12" height="8" viewBox="0 0 12 8"><path d="M0.5 0.5 H11.5 L6 7 Z" fill="#9a9a9a" stroke="#6e6e6e" stroke-width="0.6"/></svg><div class="t" style="left:1386px;top:107px">Filter</div><div class="ab" style="left:11px;top:101px;width:391px;height:450px;background:#fff;border:1px solid #828790;overflow:hidden"><div class="ab" style="left:308px;top:2px;width:3px;height:20px;background:#b8ec88"></div><div class="ab" style="left:308px;top:2px;width:1px;height:20px;background:#a6e36a"></div><svg style="left:42px;top:4px" width="14" height="14" viewBox="0 0 14 14"><g opacity="0.6"><rect x="0.5" y="0.5" width="13" height="13" rx="1" fill="#fff" stroke="#6d98d0"/><rect x="2" y="2" width="10" height="1.3" fill="#6cbf6c"/><rect x="2" y="4" width="10" height="8" fill="#a9c5ea"/><path d="M3 5.5h1M5 5.5h3M9 5.5h3M3 7.5h1M5 7.5h3M9 7.5h3M3 9.5h1M5 9.5h3M9 9.5h3M3 11.5h1M5 11.5h3M9 11.5h3" stroke="#fff" stroke-width="1"/></g></svg><div class="t" style="left:63px;top:4px">app_package_activity_plugin</div><div class="t" style="left:268px;top:4px;width:99px;text-align:right;letter-spacing:-0.4px">80.0 KiB</div><div class="ab" style="left:308px;top:22px;width:1px;height:20px;background:#b8ec88"></div><div class="ab" style="left:308px;top:22px;width:1px;height:20px;background:#a6e36a"></div><svg style="left:42px;top:24px" width="14" height="14" viewBox="0 0 14 14"><g opacity="0.6"><rect x="0.5" y="0.5" width="13" height="13" rx="1" fill="#fff" stroke="#6d98d0"/><rect x="2" y="2" width="10" height="1.3" fill="#6cbf6c"/><rect x="2" y="4" width="10" height="8" fill="#a9c5ea"/><path d="M3 5.5h1M5 5.5h3M9 5.5h3M3 7.5h1M5 7.5h3M9 7.5h3M3 9.5h1M5 9.5h3M9 9.5h3M3 11.5h1M5 11.5h3M9 11.5h3" stroke="#fff" stroke-width="1"/></g></svg><div class="t" style="left:63px;top:24px">app_package_participant</div><div class="t" style="left:268px;top:24px;width:99px;text-align:right;letter-spacing:-0.4px">32.0 KiB</div><div class="ab" style="left:308px;top:42px;width:1px;height:20px;background:#b8ec88"></div><div class="ab" style="left:308px;top:42px;width:1px;height:20px;background:#a6e36a"></div><svg style="left:42px;top:44px" width="14" height="14" viewBox="0 0 14 14"><g opacity="0.45"><rect x="0.5" y="0.5" width="13" height="13" rx="1" fill="#fff" stroke="#6d98d0"/><rect x="2" y="2" width="10" height="1.3" fill="#6cbf6c"/><rect x="2" y="4" width="10" height="8" fill="#a9c5ea"/><path d="M3 5.5h1M5 5.5h3M9 5.5h3M3 7.5h1M5 7.5h3M9 7.5h3M3 9.5h1M5 9.5h3M9 9.5h3M3 11.5h1M5 11.5h3M9 11.5h3" stroke="#fff" stroke-width="1"/></g></svg><div class="t" style="left:63px;top:44px">app_plugin_default</div><div class="t" style="left:268px;top:44px;width:99px;text-align:right;letter-spacing:-0.4px">32.0 KiB</div><div class="ab" style="left:308px;top:62px;width:1px;height:20px;background:#b8ec88"></div><div class="ab" style="left:308px;top:62px;width:1px;height:20px;background:#a6e36a"></div><svg style="left:42px;top:64px" width="14" height="14" viewBox="0 0 14 14"><g opacity="1"><rect x="0.5" y="0.5" width="13" height="13" rx="1" fill="#fff" stroke="#6d98d0"/><rect x="2" y="2" width="10" height="1.3" fill="#6cbf6c"/><rect x="2" y="4" width="10" height="8" fill="#a9c5ea"/><path d="M3 5.5h1M5 5.5h3M9 5.5h3M3 7.5h1M5 7.5h3M9 7.5h3M3 9.5h1M5 9.5h3M9 9.5h3M3 11.5h1M5 11.5h3M9 11.5h3" stroke="#fff" stroke-width="1"/></g></svg><div class="t" style="left:63px;top:64px">app_report_activity</div><div class="t" style="left:268px;top:64px;width:99px;text-align:right;letter-spacing:-0.4px">32.0 KiB</div><div class="ab" style="left:1px;top:81px;width:370px;height:20px;border:1px solid #7da2ce;border-radius:2px;background:linear-gradient(#dcebfc,#c1dbfc)"></div><div class="ab" style="left:308px;top:82px;width:1px;height:20px;background:#b8ec88"></div><div class="ab" style="left:308px;top:82px;width:1px;height:20px;background:#a6e36a"></div><svg style="left:42px;top:84px" width="14" height="14" viewBox="0 0 14 14"><g opacity="1"><rect x="0.5" y="0.5" width="13" height="13" rx="1" fill="#fff" stroke="#6d98d0"/><rect x="2" y="2" width="10" height="1.3" fill="#6cbf6c"/><rect x="2" y="4" width="10" height="8" fill="#a9c5ea"/><path d="M3 5.5h1M5 5.5h3M9 5.5h3M3 7.5h1M5 7.5h3M9 7.5h3M3 9.5h1M5 9.5h3M9 9.5h3M3 11.5h1M5 11.5h3M9 11.5h3" stroke="#fff" stroke-width="1"/></g></svg><div class="t" style="left:63px;top:84px">app_report_activity_instance</div><div class="t" style="left:268px;top:84px;width:99px;text-align:right;letter-spacing:-0.4px">48.0 KiB</div><div class="ab" style="left:308px;top:102px;width:1px;height:20px;background:#b8ec88"></div><div class="ab" style="left:308px;top:102px;width:1px;height:20px;background:#a6e36a"></div><svg style="left:42px;top:104px" width="14" height="14" viewBox="0 0 14 14"><g opacity="0.4"><rect x="0.5" y="0.5" width="13" height="13" rx="1" fill="#fff" stroke="#6d98d0"/><rect x="2" y="2" width="10" height="1.3" fill="#6cbf6c"/><rect x="2" y="4" width="10" height="8" fill="#a9c5ea"/><path d="M3 5.5h1M5 5.5h3M9 5.5h3M3 7.5h1M5 7.5h3M9 7.5h3M3 9.5h1M5 9.5h3M9 9.5h3M3 11.5h1M5 11.5h3M9 11.5h3" stroke="#fff" stroke-width="1"/></g></svg><div class="t" style="left:63px;top:104px">app_report_app</div><div class="t" style="left:268px;top:104px;width:99px;text-align:right;letter-spacing:-0.4px">16.0 KiB</div><div class="ab" style="left:308px;top:122px;width:1px;height:20px;background:#b8ec88"></div><div class="ab" style="left:308px;top:122px;width:1px;height:20px;background:#a6e36a"></div><svg style="left:42px;top:124px" width="14" height="14" viewBox="0 0 14 14"><g opacity="1"><rect x="0.5" y="0.5" width="13" height="13" rx="1" fill="#fff" stroke="#6d98d0"/><rect x="2" y="2" width="10" height="1.3" fill="#6cbf6c"/><rect x="2" y="4" width="10" height="8" fill="#a9c5ea"/><path d="M3 5.5h1M5 5.5h3M9 5.5h3M3 7.5h1M5 7.5h3M9 7.5h3M3 9.5h1M5 9.5h3M9 9.5h3M3 11.5h1M5 11.5h3M9 11.5h3" stroke="#fff" stroke-width="1"/></g></svg><div class="t" style="left:63px;top:124px">app_report_package</div><div class="t" style="left:268px;top:124px;width:99px;text-align:right;letter-spacing:-0.4px">32.0 KiB</div><div class="ab" style="left:308px;top:142px;width:1px;height:20px;background:#b8ec88"></div><div class="ab" style="left:308px;top:142px;width:1px;height:20px;background:#a6e36a"></div><svg style="left:42px;top:144px" width="14" height="14" viewBox="0 0 14 14"><g opacity="1"><rect x="0.5" y="0.5" width="13" height="13" rx="1" fill="#fff" stroke="#6d98d0"/><rect x="2" y="2" width="10" height="1.3" fill="#6cbf6c"/><rect x="2" y="4" width="10" height="8" fill="#a9c5ea"/><path d="M3 5.5h1M5 5.5h3M9 5.5h3M3 7.5h1M5 7.5h3M9 7.5h3M3 9.5h1M5 9.5h3M9 9.5h3M3 11.5h1M5 11.5h3M9 11.5h3" stroke="#fff" stroke-width="1"/></g></svg><div class="t" style="left:63px;top:144px">app_report_process</div><div class="t" style="left:268px;top:144px;width:99px;text-align:right;letter-spacing:-0.4px">32.0 KiB</div><div class="ab" style="left:308px;top:162px;width:1px;height:20px;background:#b8ec88"></div><div class="ab" style="left:308px;top:162px;width:1px;height:20px;background:#a6e36a"></div><svg style="left:42px;top:164px" width="14" height="14" viewBox="0 0 14 14"><g opacity="1"><rect x="0.5" y="0.5" width="13" height="13" rx="1" fill="#fff" stroke="#6d98d0"/><rect x="2" y="2" width="10" height="1.3" fill="#6cbf6c"/><rect x="2" y="4" width="10" height="8" fill="#a9c5ea"/><path d="M3 5.5h1M5 5.5h3M9 5.5h3M3 7.5h1M5 7.5h3M9 7.5h3M3 9.5h1M5 9.5h3M9 9.5h3M3 11.5h1M5 11.5h3M9 11.5h3" stroke="#fff" stroke-width="1"/></g></svg><div class="t" style="left:63px;top:164px">app_report_process_instance</div><div class="t" style="left:268px;top:164px;width:99px;text-align:right;letter-spacing:-0.4px">32.0 KiB</div><div class="ab" style="left:308px;top:182px;width:9px;height:20px;background:#b8ec88"></div><div class="ab" style="left:308px;top:182px;width:1px;height:20px;background:#a6e36a"></div><svg style="left:42px;top:184px" width="14" height="14" viewBox="0 0 14 14"><g opacity="0.55"><rect x="0.5" y="0.5" width="13" height="13" rx="1" fill="#fff" stroke="#6d98d0"/><rect x="2" y="2" width="10" height="1.3" fill="#6cbf6c"/><rect x="2" y="4" width="10" height="8" fill="#a9c5ea"/><path d="M3 5.5h1M5 5.5h3M9 5.5h3M3 7.5h1M5 7.5h3M9 7.5h3M3 9.5h1M5 9.5h3M9 9.5h3M3 11.5h1M5 11.5h3M9 11.5h3" stroke="#fff" stroke-width="1"/></g></svg><div class="t" style="left:63px;top:184px">app_userview</div><div class="t" style="left:268px;top:184px;width:99px;text-align:right;letter-spacing:-0.4px">256.0 KiB</div><div class="ab" style="left:308px;top:202px;width:2px;height:20px;background:#b8ec88"></div><div class="ab" style="left:308px;top:202px;width:1px;height:20px;background:#a6e36a"></div><svg style="left:42px;top:204px" width="14" height="14" viewBox="0 0 14 14"><g opacity="0.6"><rect x="0.5" y="0.5" width="13" height="13" rx="1" fill="#fff" stroke="#6d98d0"/><rect x="2" y="2" width="10" height="1.3" fill="#6cbf6c"/><rect x="2" y="4" width="10" height="8" fill="#a9c5ea"/><path d="M3 5.5h1M5 5.5h3M9 5.5h3M3 7.5h1M5 7.5h3M9 7.5h3M3 9.5h1M5 9.5h3M9 9.5h3M3 11.5h1M5 11.5h3M9 11.5h3" stroke="#fff" stroke-width="1"/></g></svg><div class="t" style="left:63px;top:204px">dir_department</div><div class="t" style="left:268px;top:204px;width:99px;text-align:right;letter-spacing:-0.4px">64.0 KiB</div><div class="ab" style="left:308px;top:222px;width:3px;height:20px;background:#b8ec88"></div><div class="ab" style="left:308px;top:222px;width:1px;height:20px;background:#a6e36a"></div><svg style="left:42px;top:224px" width="14" height="14" viewBox="0 0 14 14"><g opacity="0.6"><rect x="0.5" y="0.5" width="13" height="13" rx="1" fill="#fff" stroke="#6d98d0"/><rect x="2" y="2" width="10" height="1.3" fill="#6cbf6c"/><rect x="2" y="4" width="10" height="8" fill="#a9c5ea"/><path d="M3 5.5h1M5 5.5h3M9 5.5h3M3 7.5h1M5 7.5h3M9 7.5h3M3 9.5h1M5 9.5h3M9 9.5h3M3 11.5h1M5 11.5h3M9 11.5h3" stroke="#fff" stroke-width="1"/></g></svg><div class="t" style="left:63px;top:224px">dir_employment</div><div class="t" style="left:268px;top:224px;width:99px;text-align:right;letter-spacing:-0.4px">80.0 KiB</div><div class="ab" style="left:308px;top:242px;width:1px;height:20px;background:#b8ec88"></div><div class="ab" style="left:308px;top:242px;width:1px;height:20px;background:#a6e36a"></div><svg style="left:42px;top:244px" width="14" height="14" viewBox="0 0 14 14"><g opacity="0.6"><rect x="0.5" y="0.5" width="13" height="13" rx="1" fill="#fff" stroke="#6d98d0"/><rect x="2" y="2" width="10" height="1.3" fill="#6cbf6c"/><rect x="2" y="4" width="10" height="8" fill="#a9c5ea"/><path d="M3 5.5h1M5 5.5h3M9 5.5h3M3 7.5h1M5 7.5h3M9 7.5h3M3 9.5h1M5 9.5h3M9 9.5h3M3 11.5h1M5 11.5h3M9 11.5h3" stroke="#fff" stroke-width="1"/></g></svg><div class="t" style="left:63px;top:244px">dir_employment_report_to</div><div class="t" style="left:268px;top:244px;width:99px;text-align:right;letter-spacing:-0.4px">48.0 KiB</div><div class="ab" style="left:308px;top:262px;width:1px;height:20px;background:#b8ec88"></div><div class="ab" style="left:308px;top:262px;width:1px;height:20px;background:#a6e36a"></div><svg style="left:42px;top:264px" width="14" height="14" viewBox="0 0 14 14"><g opacity="0.6"><rect x="0.5" y="0.5" width="13" height="13" rx="1" fill="#fff" stroke="#6d98d0"/><rect x="2" y="2" width="10" height="1.3" fill="#6cbf6c"/><rect x="2" y="4" width="10" height="8" fill="#a9c5ea"/><path d="M3 5.5h1M5 5.5h3M9 5.5h3M3 7.5h1M5 7.5h3M9 7.5h3M3 9.5h1M5 9.5h3M9 9.5h3M3 11.5h1M5 11.5h3M9 11.5h3" stroke="#fff" stroke-width="1"/></g></svg><div class="t" style="left:63px;top:264px">dir_grade</div><div class="t" style="left:268px;top:264px;width:99px;text-align:right;letter-spacing:-0.4px">32.0 KiB</div><div class="ab" style="left:308px;top:282px;width:1px;height:20px;background:#b8ec88"></div><div class="ab" style="left:308px;top:282px;width:1px;height:20px;background:#a6e36a"></div><svg style="left:42px;top:284px" width="14" height="14" viewBox="0 0 14 14"><g opacity="0.6"><rect x="0.5" y="0.5" width="13" height="13" rx="1" fill="#fff" stroke="#6d98d0"/><rect x="2" y="2" width="10" height="1.3" fill="#6cbf6c"/><rect x="2" y="4" width="10" height="8" fill="#a9c5ea"/><path d="M3 5.5h1M5 5.5h3M9 5.5h3M3 7.5h1M5 7.5h3M9 7.5h3M3 9.5h1M5 9.5h3M9 9.5h3M3 11.5h1M5 11.5h3M9 11.5h3" stroke="#fff" stroke-width="1"/></g></svg><div class="t" style="left:63px;top:284px">dir_group</div><div class="t" style="left:268px;top:284px;width:99px;text-align:right;letter-spacing:-0.4px">32.0 KiB</div><div class="ab" style="left:308px;top:302px;width:1px;height:20px;background:#b8ec88"></div><div class="ab" style="left:308px;top:302px;width:1px;height:20px;background:#a6e36a"></div><svg style="left:42px;top:304px" width="14" height="14" viewBox="0 0 14 14"><g opacity="0.6"><rect x="0.5" y="0.5" width="13" height="13" rx="1" fill="#fff" stroke="#6d98d0"/><rect x="2" y="2" width="10" height="1.3" fill="#6cbf6c"/><rect x="2" y="4" width="10" height="8" fill="#a9c5ea"/><path d="M3 5.5h1M5 5.5h3M9 5.5h3M3 7.5h1M5 7.5h3M9 7.5h3M3 9.5h1M5 9.5h3M9 9.5h3M3 11.5h1M5 11.5h3M9 11.5h3" stroke="#fff" stroke-width="1"/></g></svg><div class="t" style="left:63px;top:304px">dir_organization</div><div class="t" style="left:268px;top:304px;width:99px;text-align:right;letter-spacing:-0.4px">32.0 KiB</div><div class="ab" style="left:308px;top:322px;width:1px;height:20px;background:#b8ec88"></div><div class="ab" style="left:308px;top:322px;width:1px;height:20px;background:#a6e36a"></div><svg style="left:42px;top:324px" width="14" height="14" viewBox="0 0 14 14"><g opacity="0.6"><rect x="0.5" y="0.5" width="13" height="13" rx="1" fill="#fff" stroke="#6d98d0"/><rect x="2" y="2" width="10" height="1.3" fill="#6cbf6c"/><rect x="2" y="4" width="10" height="8" fill="#a9c5ea"/><path d="M3 5.5h1M5 5.5h3M9 5.5h3M3 7.5h1M5 7.5h3M9 7.5h3M3 9.5h1M5 9.5h3M9 9.5h3M3 11.5h1M5 11.5h3M9 11.5h3" stroke="#fff" stroke-width="1"/></g></svg><div class="t" style="left:63px;top:324px">dir_role</div><div class="t" style="left:268px;top:324px;width:99px;text-align:right;letter-spacing:-0.4px">16.0 KiB</div><div class="ab" style="left:308px;top:342px;width:1px;height:20px;background:#b8ec88"></div><div class="ab" style="left:308px;top:342px;width:1px;height:20px;background:#a6e36a"></div><svg style="left:42px;top:344px" width="14" height="14" viewBox="0 0 14 14"><g opacity="0.6"><rect x="0.5" y="0.5" width="13" height="13" rx="1" fill="#fff" stroke="#6d98d0"/><rect x="2" y="2" width="10" height="1.3" fill="#6cbf6c"/><rect x="2" y="4" width="10" height="8" fill="#a9c5ea"/><path d="M3 5.5h1M5 5.5h3M9 5.5h3M3 7.5h1M5 7.5h3M9 7.5h3M3 9.5h1M5 9.5h3M9 9.5h3M3 11.5h1M5 11.5h3M9 11.5h3" stroke="#fff" stroke-width="1"/></g></svg><div class="t" style="left:63px;top:344px">dir_user</div><div class="t" style="left:268px;top:344px;width:99px;text-align:right;letter-spacing:-0.4px">16.0 KiB</div><div class="ab" style="left:308px;top:362px;width:1px;height:20px;background:#b8ec88"></div><div class="ab" style="left:308px;top:362px;width:1px;height:20px;background:#a6e36a"></div><svg style="left:42px;top:364px" width="14" height="14" viewBox="0 0 14 14"><g opacity="0.6"><rect x="0.5" y="0.5" width="13" height="13" rx="1" fill="#fff" stroke="#6d98d0"/><rect x="2" y="2" width="10" height="1.3" fill="#6cbf6c"/><rect x="2" y="4" width="10" height="8" fill="#a9c5ea"/><path d="M3 5.5h1M5 5.5h3M9 5.5h3M3 7.5h1M5 7.5h3M9 7.5h3M3 9.5h1M5 9.5h3M9 9.5h3M3 11.5h1M5 11.5h3M9 11.5h3" stroke="#fff" stroke-width="1"/></g></svg><div class="t" style="left:63px;top:364px">dir_user_extra</div><div class="t" style="left:268px;top:364px;width:99px;text-align:right;letter-spacing:-0.4px">16.0 KiB</div><div class="ab" style="left:308px;top:382px;width:1px;height:20px;background:#b8ec88"></div><div class="ab" style="left:308px;top:382px;width:1px;height:20px;background:#a6e36a"></div><svg style="left:42px;top:384px" width="14" height="14" viewBox="0 0 14 14"><g opacity="0.6"><rect x="0.5" y="0.5" width="13" height="13" rx="1" fill="#fff" stroke="#6d98d0"/><rect x="2" y="2" width="10" height="1.3" fill="#6cbf6c"/><rect x="2" y="4" width="10" height="8" fill="#a9c5ea"/><path d="M3 5.5h1M5 5.5h3M9 5.5h3M3 7.5h1M5 7.5h3M9 7.5h3M3 9.5h1M5 9.5h3M9 9.5h3M3 11.5h1M5 11.5h3M9 11.5h3" stroke="#fff" stroke-width="1"/></g></svg><div class="t" style="left:63px;top:384px">dir_user_group</div><div class="t" style="left:268px;top:384px;width:99px;text-align:right;letter-spacing:-0.4px">48.0 KiB</div><div class="ab" style="left:308px;top:402px;width:1px;height:20px;background:#b8ec88"></div><div class="ab" style="left:308px;top:402px;width:1px;height:20px;background:#a6e36a"></div><svg style="left:42px;top:404px" width="14" height="14" viewBox="0 0 14 14"><g opacity="0.6"><rect x="0.5" y="0.5" width="13" height="13" rx="1" fill="#fff" stroke="#6d98d0"/><rect x="2" y="2" width="10" height="1.3" fill="#6cbf6c"/><rect x="2" y="4" width="10" height="8" fill="#a9c5ea"/><path d="M3 5.5h1M5 5.5h3M9 5.5h3M3 7.5h1M5 7.5h3M9 7.5h3M3 9.5h1M5 9.5h3M9 9.5h3M3 11.5h1M5 11.5h3M9 11.5h3" stroke="#fff" stroke-width="1"/></g></svg><div class="t" style="left:63px;top:404px">dir_user_password_history</div><div class="t" style="left:268px;top:404px;width:99px;text-align:right;letter-spacing:-0.4px">16.0 KiB</div><div class="ab" style="left:308px;top:422px;width:1px;height:20px;background:#b8ec88"></div><div class="ab" style="left:308px;top:422px;width:1px;height:20px;background:#a6e36a"></div><svg style="left:42px;top:424px" width="14" height="14" viewBox="0 0 14 14"><g opacity="0.6"><rect x="0.5" y="0.5" width="13" height="13" rx="1" fill="#fff" stroke="#6d98d0"/><rect x="2" y="2" width="10" height="1.3" fill="#6cbf6c"/><rect x="2" y="4" width="10" height="8" fill="#a9c5ea"/><path d="M3 5.5h1M5 5.5h3M9 5.5h3M3 7.5h1M5 7.5h3M9 7.5h3M3 9.5h1M5 9.5h3M9 9.5h3M3 11.5h1M5 11.5h3M9 11.5h3" stroke="#fff" stroke-width="1"/></g></svg><div class="t" style="left:63px;top:424px">dir_user_role</div><div class="t" style="left:268px;top:424px;width:99px;text-align:right;letter-spacing:-0.4px">48.0 KiB</div><div class="ab" style="left:308px;top:442px;width:1px;height:20px;background:#b8ec88"></div><div class="ab" style="left:308px;top:442px;width:1px;height:20px;background:#a6e36a"></div><svg style="left:42px;top:444px" width="14" height="14" viewBox="0 0 14 14"><g opacity="0.6"><rect x="0.5" y="0.5" width="13" height="13" rx="1" fill="#fff" stroke="#6d98d0"/><rect x="2" y="2" width="10" height="1.3" fill="#6cbf6c"/><rect x="2" y="4" width="10" height="8" fill="#a9c5ea"/><path d="M3 5.5h1M5 5.5h3M9 5.5h3M3 7.5h1M5 7.5h3M9 7.5h3M3 9.5h1M5 9.5h3M9 9.5h3M3 11.5h1M5 11.5h3M9 11.5h3" stroke="#fff" stroke-width="1"/></g></svg><div class="t" style="left:63px;top:444px">dir_userview</div><div class="t" style="left:268px;top:444px;width:99px;text-align:right;letter-spacing:-0.4px">16.0 KiB</div><div class="ab" style="left:372px;top:0;width:17px;height:448px;background:#f0f0f0;border-left:1px solid #f0f0f0"></div><svg style="left:377px;top:7px" width="8" height="5" viewBox="0 0 8 5"><path d="M0 4.5 L3.5 0.5 L7 4.5 Z" fill="#333"/></svg><svg style="left:377px;top:436px" width="8" height="5" viewBox="0 0 8 5"><path d="M0 0.5 L3.5 4.5 L7 0.5 Z" fill="#333"/></svg><div class="ab" style="left:373px;top:153px;width:15px;height:59px;border:1px solid #979797;border-radius:2px;background:linear-gradient(90deg,#ededed,#e0e0e0 50%,#d2d2d2)"></div><div class="ab" style="left:377px;top:179px;width:7px;height:7px;background:repeating-linear-gradient(#3a3a3a 0 1px,transparent 1px 3px)"></div></div><div class="ab" style="left:44px;top:159px;width:344px;height:126px;border:5px solid #e8141c"></div><div class="ab" style="left:410px;top:127px;width:1029px;height:420px;background:#fff;border:1px solid #828790;overflow:hidden"><div class="ab" style="left:0;top:0;width:1027px;height:19px;background:linear-gradient(#ffffff 0px,#ffffff 8px,#f7f8fa 8px,#f1f2f4 18px);border-bottom:1px solid #d5d5d5"></div><div class="ab" style="left:300px;top:0;width:1px;height:19px;background:#e5e5e5"></div><div class="ab" style="left:379px;top:0;width:1px;height:19px;background:#e5e5e5"></div><div class="ab" style="left:561px;top:0;width:1px;height:19px;background:#e5e5e5"></div><div class="ab" style="left:647px;top:0;width:1px;height:19px;background:#e5e5e5"></div><div class="ab" style="left:780px;top:0;width:1px;height:19px;background:#e5e5e5"></div><div class="ab" style="left:889px;top:0;width:1px;height:19px;background:#e5e5e5"></div><div class="t" style="left:26px;top:4px;letter-spacing:-0.45px">instanceId</div><div class="t" style="left:306px;top:4px;letter-spacing:-0.45px">performer</div><div class="t" style="left:385px;top:4px;letter-spacing:-0.45px">state</div><div class="t" style="left:567px;top:4px;letter-spacing:-0.45px">status</div><div class="t" style="left:653px;top:4px;letter-spacing:-0.45px">nameOfAcceptedUser</div><div class="t" style="left:786px;top:4px;letter-spacing:-0.45px">assignmentUsers</div><div class="t" style="left:895px;top:4px;letter-spacing:-0.45px">due</div><svg style="left:9px;top:6px" width="12" height="10" viewBox="0 0 12 10"><circle cx="8.5" cy="3.5" r="3" fill="#f2c94c" stroke="#c99a1a" stroke-width="0.7"/><circle cx="9" cy="3" r="1" fill="#fff6c8"/><path d="M6.3 5.5 L1 9.5" stroke="#e0b030" stroke-width="2.2"/><path d="M2.5 8.3 L3.8 9.6 M4 7.2 L5 8.2" stroke="#e0b030" stroke-width="1.4"/></svg><div class="ab" style="left:0;top:37px;width:1027px;height:1px;background:#f0f0f0"></div><div class="ab" style="left:0px;top:20px;width:300px;height:17px;background:#3399ff"></div><div class="t" style="left:9px;top:22px;color:#fff;font-weight:bold;letter-spacing:0;">179_41_hr_expense_process1_new_claim</div><div class="ab" style="left:301px;top:20px;width:78px;height:17px;background:#d9d9d9"></div><div class="t" style="left:308px;top:22px;color:#000;letter-spacing:-0.45px;">claimant</div><div class="ab" style="left:380px;top:20px;width:181px;height:17px;background:#d9d9d9"></div><div class="t" style="left:387px;top:22px;color:#000;letter-spacing:-0.45px;">closed.completed</div><div class="ab" style="left:562px;top:20px;width:85px;height:17px;background:#d9d9d9"></div><div class="t" style="left:569px;top:22px;color:#000;letter-spacing:-0.45px;">Completed</div><div class="ab" style="left:648px;top:20px;width:132px;height:17px;background:#d9d9d9"></div><div class="t" style="left:655px;top:22px;color:#000;letter-spacing:-0.45px;">admin</div><div class="ab" style="left:781px;top:20px;width:108px;height:17px;background:#d9d9d9"></div><div class="ab" style="left:890px;top:20px;width:136px;height:17px;background:#d9d9d9"></div><div class="t" style="left:897px;top:22px;color:#000;letter-spacing:-0.45px;">(NULL)</div><div class="ab" style="left:0;top:55px;width:1027px;height:1px;background:#f0f0f0"></div><div class="t" style="left:9px;top:40px;color:#008000;font-weight:bold;letter-spacing:0;">180_41_hr_expense_process1_tool4</div><div class="t" style="left:308px;top:40px;color:#008000;letter-spacing:-0.45px;">system</div><div class="t" style="left:387px;top:40px;color:#008000;letter-spacing:-0.45px;">closed.completed</div><div class="t" style="left:569px;top:40px;color:#008000;letter-spacing:-0.45px;">Completed</div><div class="ab" style="left:648px;top:38px;width:132px;height:17px;background:#ff00ff"></div><div class="t" style="left:655px;top:40px;color:#a0a4a0;letter-spacing:-0.45px;">(NULL)</div><div class="ab" style="left:890px;top:38px;width:136px;height:17px;background:#ff00ff"></div><div class="t" style="left:897px;top:40px;color:#c8689a;letter-spacing:-0.45px;">(NULL)</div><div class="ab" style="left:0;top:73px;width:1027px;height:1px;background:#f0f0f0"></div><div class="t" style="left:9px;top:58px;color:#008000;font-weight:bold;letter-spacing:0;">181_41_hr_expense_process1_approve_claim</div><div class="t" style="left:308px;top:58px;color:#008000;letter-spacing:-0.45px;">approver</div><div class="t" style="left:387px;top:58px;color:#008000;letter-spacing:-0.45px;">closed.completed</div><div class="t" style="left:569px;top:58px;color:#008000;letter-spacing:-0.45px;">Completed</div><div class="t" style="left:655px;top:58px;color:#008000;letter-spacing:-0.45px;">admin</div><div class="t" style="left:897px;top:58px;color:#800000;letter-spacing:-0.45px;">2015-09-14 14:40:00</div><div class="ab" style="left:0;top:91px;width:1027px;height:1px;background:#f0f0f0"></div><div class="t" style="left:9px;top:76px;color:#008000;font-weight:bold;letter-spacing:0;">183_41_hr_expense_process1_verify_claim</div><div class="t" style="left:308px;top:76px;color:#008000;letter-spacing:-0.45px;">finance</div><div class="t" style="left:387px;top:76px;color:#008000;letter-spacing:-0.45px;">closed.completed</div><div class="t" style="left:569px;top:76px;color:#008000;letter-spacing:-0.45px;">Completed</div><div class="t" style="left:655px;top:76px;color:#008000;letter-spacing:-0.45px;">admin</div><div class="ab" style="left:890px;top:74px;width:136px;height:17px;background:#ff00ff"></div><div class="t" style="left:897px;top:76px;color:#c8689a;letter-spacing:-0.45px;">(NULL)</div><div class="ab" style="left:0;top:109px;width:1027px;height:1px;background:#f0f0f0"></div><div class="t" style="left:9px;top:94px;color:#008000;font-weight:bold;letter-spacing:0;">185_41_hr_expense_process1_tool1</div><div class="t" style="left:308px;top:94px;color:#008000;letter-spacing:-0.45px;">system</div><div class="t" style="left:387px;top:94px;color:#008000;letter-spacing:-0.45px;">closed.completed</div><div class="t" style="left:569px;top:94px;color:#008000;letter-spacing:-0.45px;">Completed</div><div class="ab" style="left:648px;top:92px;width:132px;height:17px;background:#ff00ff"></div><div class="t" style="left:655px;top:94px;color:#a0a4a0;letter-spacing:-0.45px;">(NULL)</div><div class="ab" style="left:890px;top:92px;width:136px;height:17px;background:#ff00ff"></div><div class="t" style="left:897px;top:94px;color:#c8689a;letter-spacing:-0.45px;">(NULL)</div><div class="ab" style="left:0;top:127px;width:1027px;height:1px;background:#f0f0f0"></div><div class="t" style="left:9px;top:112px;color:#008000;font-weight:bold;letter-spacing:0;">186_42_hr_expense_process1_new_claim</div><div class="t" style="left:308px;top:112px;color:#008000;letter-spacing:-0.45px;">claimant</div><div class="t" style="left:387px;top:112px;color:#008000;letter-spacing:-0.45px;">open.not_running.not_started</div><div class="t" style="left:569px;top:112px;color:#008000;letter-spacing:-0.45px;">Pending</div><div class="ab" style="left:648px;top:110px;width:132px;height:17px;background:#ff00ff"></div><div class="t" style="left:655px;top:112px;color:#a0a4a0;letter-spacing:-0.45px;">(NULL)</div><div class="t" style="left:788px;top:112px;color:#008000;letter-spacing:-0.45px;">admin</div><div class="ab" style="left:890px;top:110px;width:136px;height:17px;background:#ff00ff"></div><div class="t" style="left:897px;top:112px;color:#c8689a;letter-spacing:-0.45px;">(NULL)</div><div class="ab" style="left:0;top:145px;width:1027px;height:1px;background:#f0f0f0"></div><div class="t" style="left:9px;top:130px;color:#008000;font-weight:bold;letter-spacing:0;">187_43_hr_expense_process1_new_claim</div><div class="t" style="left:308px;top:130px;color:#008000;letter-spacing:-0.45px;">claimant</div><div class="t" style="left:387px;top:130px;color:#008000;letter-spacing:-0.45px;">open.not_running.not_started</div><div class="t" style="left:569px;top:130px;color:#008000;letter-spacing:-0.45px;">Pending</div><div class="ab" style="left:648px;top:128px;width:132px;height:17px;background:#ff00ff"></div><div class="t" style="left:655px;top:130px;color:#a0a4a0;letter-spacing:-0.45px;">(NULL)</div><div class="t" style="left:788px;top:130px;color:#008000;letter-spacing:-0.45px;">admin</div><div class="ab" style="left:890px;top:128px;width:136px;height:17px;background:#ff00ff"></div><div class="t" style="left:897px;top:130px;color:#c8689a;letter-spacing:-0.45px;">(NULL)</div><div class="ab" style="left:0;top:163px;width:1027px;height:1px;background:#f0f0f0"></div><div class="t" style="left:9px;top:148px;color:#008000;font-weight:bold;letter-spacing:0;">188_44_hr_expense_process1_new_claim</div><div class="t" style="left:308px;top:148px;color:#008000;letter-spacing:-0.45px;">claimant</div><div class="t" style="left:387px;top:148px;color:#008000;letter-spacing:-0.45px;">closed.completed</div><div class="t" style="left:569px;top:148px;color:#008000;letter-spacing:-0.45px;">Completed</div><div class="t" style="left:655px;top:148px;color:#008000;letter-spacing:-0.45px;">admin</div><div class="ab" style="left:890px;top:146px;width:136px;height:17px;background:#ff00ff"></div><div class="t" style="left:897px;top:148px;color:#c8689a;letter-spacing:-0.45px;">(NULL)</div><div class="ab" style="left:0;top:181px;width:1027px;height:1px;background:#f0f0f0"></div><div class="t" style="left:9px;top:166px;color:#008000;font-weight:bold;letter-spacing:0;">189_44_hr_expense_process1_tool4</div><div class="t" style="left:308px;top:166px;color:#008000;letter-spacing:-0.45px;">system</div><div class="t" style="left:387px;top:166px;color:#008000;letter-spacing:-0.45px;">closed.completed</div><div class="t" style="left:569px;top:166px;color:#008000;letter-spacing:-0.45px;">Completed</div><div class="ab" style="left:648px;top:164px;width:132px;height:17px;background:#ff00ff"></div><div class="t" style="left:655px;top:166px;color:#a0a4a0;letter-spacing:-0.45px;">(NULL)</div><div class="ab" style="left:890px;top:164px;width:136px;height:17px;background:#ff00ff"></div><div class="t" style="left:897px;top:166px;color:#c8689a;letter-spacing:-0.45px;">(NULL)</div><div class="ab" style="left:0;top:199px;width:1027px;height:1px;background:#f0f0f0"></div><div class="t" style="left:9px;top:184px;color:#008000;font-weight:bold;letter-spacing:0;">190_44_hr_expense_process1_approve_claim</div><div class="t" style="left:308px;top:184px;color:#008000;letter-spacing:-0.45px;">approver</div><div class="t" style="left:387px;top:184px;color:#008000;letter-spacing:-0.45px;">open.not_running.not_started</div><div class="t" style="left:569px;top:184px;color:#008000;letter-spacing:-0.45px;">Pending</div><div class="ab" style="left:648px;top:182px;width:132px;height:17px;background:#ff00ff"></div><div class="t" style="left:655px;top:184px;color:#a0a4a0;letter-spacing:-0.45px;">(NULL)</div><div class="t" style="left:788px;top:184px;color:#008000;letter-spacing:-0.45px;">admin</div><div class="t" style="left:897px;top:184px;color:#800000;letter-spacing:-0.45px;">2015-09-14 18:15:24</div><div class="ab" style="left:0;top:217px;width:1027px;height:1px;background:#f0f0f0"></div><div class="t" style="left:9px;top:202px;color:#008000;font-weight:bold;letter-spacing:0;">191_45_hr_expense_process1_new_claim</div><div class="t" style="left:308px;top:202px;color:#008000;letter-spacing:-0.45px;">claimant</div><div class="t" style="left:387px;top:202px;color:#008000;letter-spacing:-0.45px;">closed.completed</div><div class="t" style="left:569px;top:202px;color:#008000;letter-spacing:-0.45px;">Completed</div><div class="t" style="left:655px;top:202px;color:#008000;letter-spacing:-0.45px;">admin</div><div class="ab" style="left:890px;top:200px;width:136px;height:17px;background:#ff00ff"></div><div class="t" style="left:897px;top:202px;color:#c8689a;letter-spacing:-0.45px;">(NULL)</div><div class="ab" style="left:0;top:235px;width:1027px;height:1px;background:#f0f0f0"></div><div class="t" style="left:9px;top:220px;color:#008000;font-weight:bold;letter-spacing:0;">192_45_hr_expense_process1_tool4</div><div class="t" style="left:308px;top:220px;color:#008000;letter-spacing:-0.45px;">system</div><div class="t" style="left:387px;top:220px;color:#008000;letter-spacing:-0.45px;">closed.completed</div><div class="t" style="left:569px;top:220px;color:#008000;letter-spacing:-0.45px;">Completed</div><div class="ab" style="left:648px;top:218px;width:132px;height:17px;background:#ff00ff"></div><div class="t" style="left:655px;top:220px;color:#a0a4a0;letter-spacing:-0.45px;">(NULL)</div><div class="ab" style="left:890px;top:218px;width:136px;height:17px;background:#ff00ff"></div><div class="t" style="left:897px;top:220px;color:#c8689a;letter-spacing:-0.45px;">(NULL)</div><div class="ab" style="left:0;top:253px;width:1027px;height:1px;background:#f0f0f0"></div><div class="t" style="left:9px;top:238px;color:#008000;font-weight:bold;letter-spacing:0;">193_45_hr_expense_process1_approve_claim</div><div class="t" style="left:308px;top:238px;color:#008000;letter-spacing:-0.45px;">approver</div><div class="t" style="left:387px;top:238px;color:#008000;letter-spacing:-0.45px;">open.not_running.not_started</div><div class="t" style="left:569px;top:238px;color:#008000;letter-spacing:-0.45px;">Pending</div><div class="ab" style="left:648px;top:236px;width:132px;height:17px;background:#ff00ff"></div><div class="t" style="left:655px;top:238px;color:#a0a4a0;letter-spacing:-0.45px;">(NULL)</div><div class="t" style="left:788px;top:238px;color:#008000;letter-spacing:-0.45px;">admin</div><div class="t" style="left:897px;top:238px;color:#800000;letter-spacing:-0.45px;">2015-09-17 17:46:40</div><div class="ab" style="left:0;top:271px;width:1027px;height:1px;background:#f0f0f0"></div><div class="t" style="left:9px;top:256px;color:#008000;font-weight:bold;letter-spacing:0;">194_46_hr_expense_process1_new_claim</div><div class="t" style="left:308px;top:256px;color:#008000;letter-spacing:-0.45px;">claimant</div><div class="t" style="left:387px;top:256px;color:#008000;letter-spacing:-0.45px;">closed.completed</div><div class="t" style="left:569px;top:256px;color:#008000;letter-spacing:-0.45px;">Completed</div><div class="t" style="left:655px;top:256px;color:#008000;letter-spacing:-0.45px;">admin</div><div class="ab" style="left:890px;top:254px;width:136px;height:17px;background:#ff00ff"></div><div class="t" style="left:897px;top:256px;color:#c8689a;letter-spacing:-0.45px;">(NULL)</div><div class="ab" style="left:0;top:289px;width:1027px;height:1px;background:#f0f0f0"></div><div class="t" style="left:9px;top:274px;color:#008000;font-weight:bold;letter-spacing:0;">195_46_hr_expense_process1_tool4</div><div class="t" style="left:308px;top:274px;color:#008000;letter-spacing:-0.45px;">system</div><div class="t" style="left:387px;top:274px;color:#008000;letter-spacing:-0.45px;">closed.completed</div><div class="t" style="left:569px;top:274px;color:#008000;letter-spacing:-0.45px;">Completed</div><div class="ab" style="left:648px;top:272px;width:132px;height:17px;background:#ff00ff"></div><div class="t" style="left:655px;top:274px;color:#a0a4a0;letter-spacing:-0.45px;">(NULL)</div><div class="ab" style="left:890px;top:272px;width:136px;height:17px;background:#ff00ff"></div><div class="t" style="left:897px;top:274px;color:#c8689a;letter-spacing:-0.45px;">(NULL)</div><div class="ab" style="left:0;top:307px;width:1027px;height:1px;background:#f0f0f0"></div><div class="t" style="left:9px;top:292px;color:#008000;font-weight:bold;letter-spacing:0;">196_46_hr_expense_process1_approve_claim</div><div class="t" style="left:308px;top:292px;color:#008000;letter-spacing:-0.45px;">approver</div><div class="t" style="left:387px;top:292px;color:#008000;letter-spacing:-0.45px;">open.not_running.not_started</div><div class="t" style="left:569px;top:292px;color:#008000;letter-spacing:-0.45px;">Pending</div><div class="ab" style="left:648px;top:290px;width:132px;height:17px;background:#ff00ff"></div><div class="t" style="left:655px;top:292px;color:#a0a4a0;letter-spacing:-0.45px;">(NULL)</div><div class="t" style="left:788px;top:292px;color:#008000;letter-spacing:-0.45px;">admin</div><div class="t" style="left:897px;top:292px;color:#800000;letter-spacing:-0.45px;">2015-09-17 17:54:31</div><div class="ab" style="left:0;top:325px;width:1027px;height:1px;background:#f0f0f0"></div><div class="t" style="left:9px;top:310px;color:#008000;font-weight:bold;letter-spacing:0;">231_58_hr_expense_process1_new_claim</div><div class="t" style="left:308px;top:310px;color:#008000;letter-spacing:-0.45px;">claimant</div><div class="t" style="left:387px;top:310px;color:#008000;letter-spacing:-0.45px;">closed.completed</div><div class="t" style="left:569px;top:310px;color:#008000;letter-spacing:-0.45px;">Completed</div><div class="t" style="left:655px;top:310px;color:#008000;letter-spacing:-0.45px;">cat</div><div class="ab" style="left:890px;top:308px;width:136px;height:17px;background:#ff00ff"></div><div class="t" style="left:897px;top:310px;color:#c8689a;letter-spacing:-0.45px;">(NULL)</div><div class="ab" style="left:0;top:343px;width:1027px;height:1px;background:#f0f0f0"></div><div class="t" style="left:9px;top:328px;color:#008000;font-weight:bold;letter-spacing:0;">232_58_hr_expense_process1_tool4</div><div class="t" style="left:308px;top:328px;color:#008000;letter-spacing:-0.45px;">system</div><div class="t" style="left:387px;top:328px;color:#008000;letter-spacing:-0.45px;">closed.completed</div><div class="t" style="left:569px;top:328px;color:#008000;letter-spacing:-0.45px;">Completed</div><div class="ab" style="left:648px;top:326px;width:132px;height:17px;background:#ff00ff"></div><div class="t" style="left:655px;top:328px;color:#a0a4a0;letter-spacing:-0.45px;">(NULL)</div><div class="ab" style="left:890px;top:326px;width:136px;height:17px;background:#ff00ff"></div><div class="t" style="left:897px;top:328px;color:#c8689a;letter-spacing:-0.45px;">(NULL)</div><div class="ab" style="left:0;top:361px;width:1027px;height:1px;background:#f0f0f0"></div><div class="t" style="left:9px;top:346px;color:#008000;font-weight:bold;letter-spacing:0;">233_58_hr_expense_process1_approve_claim</div><div class="t" style="left:308px;top:346px;color:#008000;letter-spacing:-0.45px;">approver</div><div class="t" style="left:387px;top:346px;color:#008000;letter-spacing:-0.45px;">open.not_running.not_started</div><div class="t" style="left:569px;top:346px;color:#008000;letter-spacing:-0.45px;">Pending</div><div class="ab" style="left:648px;top:344px;width:132px;height:17px;background:#ff00ff"></div><div class="t" style="left:655px;top:346px;color:#a0a4a0;letter-spacing:-0.45px;">(NULL)</div><div class="t" style="left:788px;top:346px;color:#008000;letter-spacing:-0.45px;">clark</div><div class="t" style="left:897px;top:346px;color:#800000;letter-spacing:-0.45px;">2015-09-24 13:48:51</div><div class="ab" style="left:300px;top:19px;width:1px;height:342px;background:#f0f0f0"></div><div class="ab" style="left:379px;top:19px;width:1px;height:342px;background:#f0f0f0"></div><div class="ab" style="left:561px;top:19px;width:1px;height:342px;background:#f0f0f0"></div><div class="ab" style="left:647px;top:19px;width:1px;height:342px;background:#f0f0f0"></div><div class="ab" style="left:780px;top:19px;width:1px;height:342px;background:#f0f0f0"></div><div class="ab" style="left:889px;top:19px;width:1px;height:342px;background:#f0f0f0"></div><div class="ab" style="left:0;top:401px;width:1027px;height:17px;background:#f0f0f0"></div><svg style="left:7px;top:405px" width="5" height="8" viewBox="0 0 5 8"><path d="M4.5 0 L0.5 4 L4.5 8 Z" fill="#333"/></svg><svg style="left:1015px;top:405px" width="5" height="8" viewBox="0 0 5 8"><path d="M0.5 0 L4.5 4 L0.5 8 Z" fill="#333"/></svg><div class="ab" style="left:19px;top:401px;width:452px;height:14px;border:1px solid #8f8f8f;border-radius:2px;background:linear-gradient(#f6f6f6,#e6e6e6 50%,#d0d0d0)"></div><div class="ab" style="left:241px;top:405px;width:7px;height:7px;background:repeating-linear-gradient(90deg,#3a3a3a 0 1px,transparent 1px 3px)"></div></div><div class="ab" style="left:11px;top:555px;width:1432px;height:82px;background:#fff;border:1px solid #828790;border-bottom:2px solid #8a8a8a;overflow:hidden"><div class="ab" style="left:0;top:0;width:18px;height:79px;background:#f0f0f0"></div><div class="ab" style="left:19px;top:0;width:1px;height:79px;background:#f4f4f4"></div><div class="t" style="left:1px;top:2px;width:16px;text-align:right;font-family:'Liberation Mono', monospace;font-size:12px;letter-spacing:-0.2px;color:#000;line-height:16px">35</div><div class="t" style="left:21px;top:2px;font-family:'Liberation Mono', monospace;font-size:12px;letter-spacing:-0.2px;line-height:16px"><span style="color:#0000ff">SHOW CREATE TABLE </span><span style="color:#808000">`jwdbkb`</span><span style="color:#0000ff">.</span><span style="color:#808000">`app_report_activity`</span><span style="color:#0000ff">;</span></div><div class="t" style="left:1px;top:18px;width:16px;text-align:right;font-family:'Liberation Mono', monospace;font-size:12px;letter-spacing:-0.2px;color:#000;line-height:16px">36</div><div class="t" style="left:21px;top:18px;font-family:'Liberation Mono', monospace;font-size:12px;letter-spacing:-0.2px;line-height:16px"><span style="color:#0000ff">SHOW CREATE TABLE </span><span style="color:#808000">`jwdbkb`</span><span style="color:#0000ff">.</span><span style="color:#808000">`app_report_activity_instance`</span><span style="color:#0000ff">;</span></div><div class="t" style="left:1px;top:34px;width:16px;text-align:right;font-family:'Liberation Mono', monospace;font-size:12px;letter-spacing:-0.2px;color:#000;line-height:16px">37</div><div class="t" style="left:21px;top:34px;font-family:'Liberation Mono', monospace;font-size:12px;letter-spacing:-0.2px;line-height:16px"><span style="color:#0000ff">SELECT  </span><span style="color:#808000">`instanceId`</span><span style="color:#0000ff">,  </span><span style="color:#808000">`performer`</span><span style="color:#0000ff">,  </span><span style="color:#808000">`state`</span><span style="color:#0000ff">,  </span><span style="color:#808000">`status`</span><span style="color:#0000ff">,  </span><span style="color:#808000">`nameOfAcceptedUser`</span><span style="color:#0000ff">,  </span><span style="color:#000080"><b>LEFT</b></span><span style="color:#0000ff">(</span><span style="color:#808000">`assignmentUsers`</span><span style="color:#0000ff">, </span><span style="color:#800080">256</span><span style="color:#0000ff">),  </span><span style="color:#808000">`due`</span><span style="color:#0000ff">,  </span><span style="color:#808000">`createdTime`</span><span style="color:#0000ff">,  </span><span style="color:#808000">`startedTime`</span><span style="color:#0000ff">,  </span><span style="color:#808000">`finishTime`</span><span style="color:#0000ff">,  </span><span style="color:#808000">`delay`</span><span style="color:#0000ff">,  </span><span style="color:#808000">`timeConsumingFromCreatedTime`</span><span style="color:#0000ff">,  </span></div><div class="t" style="left:1px;top:50px;width:16px;text-align:right;font-family:'Liberation Mono', monospace;font-size:12px;letter-spacing:-0.2px;color:#000;line-height:16px">38</div><div class="t" style="left:21px;top:50px;font-family:'Liberation Mono', monospace;font-size:12px;letter-spacing:-0.2px;line-height:16px"><span style="color:#0000ff">SHOW CREATE TABLE </span><span style="color:#808000">`jwdbkb`</span><span style="color:#0000ff">.</span><span style="color:#808000">`app_report_activity_instance`</span><span style="color:#0000ff">;</span></div><div class="ab" style="left:1413px;top:0;width:17px;height:79px;background:#f0f0f0"></div><svg style="left:1418px;top:8px" width="8" height="5" viewBox="0 0 8 5"><path d="M0 4.5 L3.5 0.5 L7 4.5 Z" fill="#333"/></svg><svg style="left:1418px;top:67px" width="8" height="5" viewBox="0 0 8 5"><path d="M0 0.5 L3.5 4.5 L7 0.5 Z" fill="#333"/></svg><div class="ab" style="left:1414px;top:45px;width:15px;height:15px;border:1px solid #979797;border-radius:2px;background:linear-gradient(90deg,#ededed,#e0e0e0 50%,#d2d2d2)"></div></div><div class="ab" style="left:11px;top:637px;width:1432px;height:18px;background:#efebeb;border-top:1px solid #fff;border-bottom:1px solid #fff"></div><div class="ab" style="left:587px;top:638px;width:1px;height:16px;background:#d5d5d5"></div><div class="ab" style="left:697px;top:638px;width:1px;height:16px;background:#d5d5d5"></div><div class="ab" style="left:837px;top:638px;width:1px;height:16px;background:#d5d5d5"></div><div class="ab" style="left:942px;top:638px;width:1px;height:16px;background:#d5d5d5"></div><div class="ab" style="left:1112px;top:638px;width:1px;height:16px;background:#d5d5d5"></div><div class="ab" style="left:1192px;top:638px;width:1px;height:16px;background:#d5d5d5"></div><svg style="left:702px;top:639px" width="14" height="14" viewBox="0 0 14 14"><circle cx="7" cy="7" r="6.4" fill="#f4ecd8" stroke="#b8925a" stroke-width="1.1"/><circle cx="7" cy="7" r="4.8" fill="#e6f0fa" stroke="#8aa6c8" stroke-width="0.7"/><path d="M7 3.8 V7 L4.8 8.6" stroke="#333" stroke-width="0.9" fill="none"/></svg><div class="t" style="left:719px;top:640px">Connected: 00:00 h</div><svg style="left:841px;top:638px" width="17" height="17" viewBox="0 0 17 17"><path d="M1 1.5 Q2.5 0.5 4.5 1.5 Q8 3.5 10 7.5 Q11.5 10.5 13 12 L15.5 14.5 L13.5 14 Q12.5 15 12 15.5 L11.5 13.5 Q9.5 11 8 8 Q6 5 4 4.5 L3.5 7 Q2.5 4.5 1 1.5 Z" fill="none" stroke="#4a5a66" stroke-width="0.9"/></svg><div class="t" style="left:859px;top:640px">MySQL 5.6.17</div><div class="t" style="left:947px;top:640px">Uptime: 2 days, 07:46 h</div><div class="ab" style="left:1193px;top:638px;width:250px;height:16px;background:#f0f0f0"></div><div class="ab" style="left:1201px;top:644px;width:7px;height:7px;border-radius:50%;background:#8fd08f;border:1.5px solid #4aa04a"></div><div class="t" style="left:1214px;top:640px">Idle.</div><div class="ab" style="left:1439px;top:643px;width:2px;height:2px;background:#b8b3b3;box-shadow:1px 1px 0 #fff"></div><div class="ab" style="left:1435px;top:647px;width:2px;height:2px;background:#b8b3b3;box-shadow:1px 1px 0 #fff"></div><div class="ab" style="left:1439px;top:647px;width:2px;height:2px;background:#b8b3b3;box-shadow:1px 1px 0 #fff"></div><div class="ab" style="left:1431px;top:651px;width:2px;height:2px;background:#b8b3b3;box-shadow:1px 1px 0 #fff"></div><div class="ab" style="left:1435px;top:651px;width:2px;height:2px;background:#b8b3b3;box-shadow:1px 1px 0 #fff"></div><div class="ab" style="left:1439px;top:651px;width:2px;height:2px;background:#b8b3b3;box-shadow:1px 1px 0 #fff"></div>
</body></html>
